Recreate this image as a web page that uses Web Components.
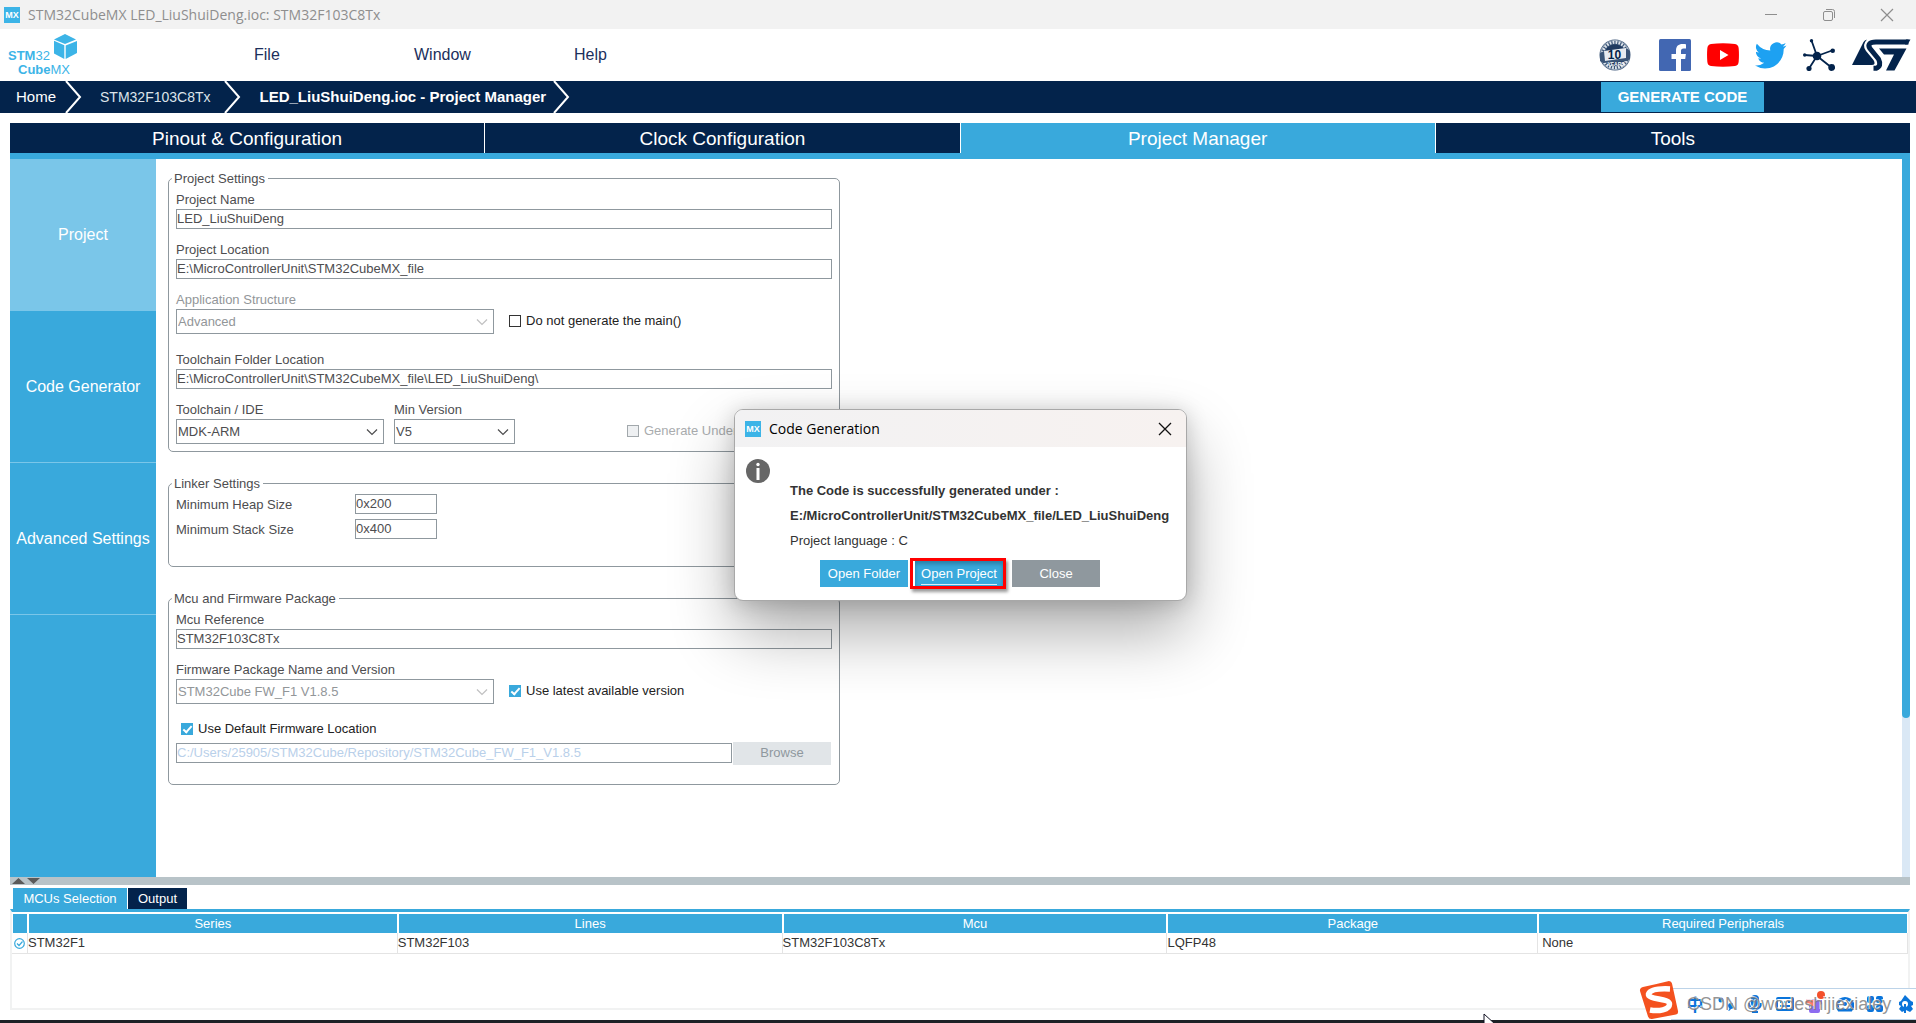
<!DOCTYPE html>
<html lang="en">
<head>
<meta charset="utf-8">
<title>STM32CubeMX</title>
<style>
html,body{margin:0;height:100%}
body{font:13px/20px "Liberation Sans",Arial,sans-serif;color:#4d4d4f;background:#fff;overflow:hidden;
--navy:#03234b;--blue:#39a9dc;--light:#7ac6e9;--line:#8f989e}
</style>
</head>
<body>
<cube-app></cube-app>
<script>
const BASE='<style>*,*::before,*::after{box-sizing:border-box}button,input,select{font:inherit;color:inherit;margin:0;border-radius:0}button{border:0;padding:0}svg{display:block;flex:none}a{color:inherit;text-decoration:none}</style>';
function define(name,html,init){
  const t=document.createElement('template');
  t.innerHTML=BASE+html;
  customElements.define(name,class extends HTMLElement{
    connectedCallback(){
      if(this.shadowRoot)return;
      const r=this.attachShadow({mode:'open'});
      r.append(t.content.cloneNode(true));
      if(init)init(this,r);
    }
  });
}

define('mx-icon',`<style>:host{display:block;flex:none}</style>
<svg width="16" height="16" viewBox="0 0 16 16"><rect width="16" height="16" fill="#3cb4e7"/><text x="8" y="11" text-anchor="middle" font-family="Liberation Sans,sans-serif" font-weight="bold" font-size="9" fill="#fff">MX</text></svg>`);

define('cube-titlebar',`<style>
:host{display:flex;align-items:center;height:29px;background:#f2f2f2;color:#8e8e8e;padding:0 22px 0 4px;font:14px/20px "Open Sans","Noto Sans",sans-serif}
span{margin-left:8px;flex:1}
.w{display:flex;gap:44px}
.w button{background:none;color:#8e8e8e}
</style>
<mx-icon></mx-icon><span><slot></slot></span>
<div class="w">
<button aria-label="Minimize"><svg width="14" height="14"><path d="M1 6.500h12" stroke="currentColor"/></svg></button>
<button aria-label="Restore"><svg width="14" height="14" fill="none" stroke="currentColor"><rect x="1.500" y="3.500" width="9" height="9" rx="1.500"/><path d="M4 1.500h6.500a2 2 0 0 1 2 2V10"/></svg></button>
<button aria-label="Close"><svg width="14" height="14"><path d="M1 1l12 12M13 1L1 13" stroke="currentColor" stroke-width="1.200"/></svg></button>
</div>`);

define('cube-header',`<style>
:host{display:flex;align-items:center;height:52px;padding:0 5px 0 8px;color:#1c2f5c;background:#fff}
nav{display:flex;flex:1;padding-left:174px;font-size:16px}
nav a{width:160px}
.i{display:flex;align-items:center;gap:16px}
.i a:first-child{margin-right:12px}
</style>
<svg width="72" height="44" viewBox="0 0 72 44" font-family="Liberation Sans,sans-serif" font-size="13" fill="#3cb4e7"><text x="0" y="27"><tspan font-weight="bold">STM</tspan>32</text><text x="10" y="41"><tspan font-weight="bold">Cube</tspan>MX</text>
<path d="M57 1L68 6.500 57 11 46 6.500z"/><path d="M46 7.800l10.300 4.500V26L46 20.500z"/><path d="M69 8l-11.300 4.500V26L69 20z"/></svg>
<nav><a href="#">File</a><a href="#">Window</a><a href="#">Help</a></nav>
<div class="i">
<a href="#" aria-label="10 years longevity commitment"><svg width="32" height="32" viewBox="0 0 32 32"><circle cx="16" cy="16" r="15.500" fill="#3b5577"/><circle cx="16" cy="16" r="12.700" fill="none" stroke="#dfe5ec" stroke-width="3" stroke-dasharray="1.800 1.200"/><circle cx="16" cy="16" r="14.700" fill="none" stroke="#c9d2dd" stroke-width=".7"/><circle cx="16" cy="16" r="10.500" fill="#1f3a60"/><path d="M1 14l4-2 22-3 4 3v8l-3 2-24 2-3-2z" fill="#3b5577"/><path d="M5 12l22-3v10L6 22z" fill="#e8ecf1"/><text x="15.500" y="19.500" text-anchor="middle" font-family="Liberation Sans,sans-serif" font-size="12" font-weight="bold" fill="#03234b">10</text><text x="17" y="26.500" text-anchor="middle" font-family="Liberation Sans,sans-serif" font-size="5" font-weight="bold" fill="#fff">YEARS</text></svg></a>
<a href="#" aria-label="Facebook"><svg width="32" height="32" viewBox="0 0 32 32"><rect width="32" height="32" rx="1.500" fill="#4267b2"/><path d="M22 32V20h4.200l.7-5H22v-3c0-1.500.6-2.400 2.600-2.400H27V5.200C26.500 5.100 25 5 23.400 5 19.600 5 17 7.200 17 11.400V15h-4.500v5H17v12z" fill="#fff"/></svg></a>
<a href="#" aria-label="YouTube"><svg width="32" height="32" viewBox="0 0 32 32"><path d="M4 5q12-1.400 24 0 3.500.5 3.700 4.500.5 6.500 0 13-.2 4-3.700 4.500-12 1.400-24 0-3.500-.5-3.700-4.500-.5-6.500 0-13Q.5 5.500 4 5z" fill="#f00"/><path d="M13 11l8.500 5L13 21z" fill="#fff"/></svg></a>
<a href="#" aria-label="Twitter"><svg width="32" height="32" viewBox="0 0 24 24"><path d="M23.600 4.900a9.700 9.700 0 0 1-2.800.8 4.900 4.900 0 0 0 2.200-2.700c-1 .6-2 1-3.100 1.200a4.900 4.900 0 0 0-8.400 4.500A13.900 13.900 0 0 1 1.400 3.500a4.900 4.900 0 0 0 1.500 6.600 4.900 4.900 0 0 1-2.200-.6c0 2.300 1.600 4.400 3.900 4.900a5 5 0 0 1-2.200.1 4.900 4.900 0 0 0 4.600 3.400A9.900 9.900 0 0 1 0 19.900a13.900 13.900 0 0 0 7.500 2.200c9.100 0 14.300-7.700 14-14.600a10 10 0 0 0 2.100-2.600z" fill="#1da1f2"/></svg></a>
<a href="#" aria-label="Community"><svg width="32" height="32" viewBox="0 0 32 32" fill="#03234b" stroke="#03234b" stroke-width="1.800"><path d="M14 17L8.500 1.500M14 17L1.500 16M14 17l15-5.500M14 17L6 29.500M14 17l14.500 11.500" /><g stroke="none"><circle cx="14" cy="17" r="4.300"/><circle cx="8.500" cy="1.700" r="1.700"/><circle cx="1.700" cy="16" r="1.700"/><circle cx="29.700" cy="11.700" r="2.300"/><circle cx="6" cy="29.500" r="2.600"/><circle cx="28.700" cy="28.500" r="3.400"/></g></svg></a>
<a href="#" aria-label="ST"><svg width="60" height="32" viewBox="0 0 60 32" fill="#03234b"><path d="M1 26L12.500 3Q13.500 1 16 .5Q10.500 6 15 12l7.500 9q3 5-2 5z"/><path d="M57.500 3H25Q15 3.500 19 9.500L27.500 20Q31 27 25 29.300H22.500" fill="none" stroke="#03234b" stroke-width="5"/><path d="M55 .5H59.500L56.600 5.500H54z"/><path d="M28 9.500H55.500L43.500 31.500H35L43 15.500H33z"/></svg></a>
</div>`);

define('cube-crumbs',`<style>
:host{display:flex;align-items:center;height:32px;background:var(--navy);color:#fff;font-size:15px}
a{padding:0 9px 0 16px}
a.d{padding:0 13px 0 18px;font-size:14px;color:#dde3ea}
b{padding:0 7px 0 19px;flex:none;font-size:15px}
button{margin-left:auto;margin-right:152px;width:163px;height:30px;background:var(--blue);font-size:15px;font-weight:bold;color:#fff}
</style>
<a href="#">Home</a><svg width="17" height="32" fill="none" stroke="#fff" stroke-width="2"><path d="M1 0l14 16L1 32"/></svg>
<a href="#" class="d">STM32F103C8Tx</a><svg width="17" height="32" fill="none" stroke="#fff" stroke-width="2"><path d="M1 0l14 16L1 32"/></svg>
<b>LED_LiuShuiDeng.ioc - Project Manager</b><svg width="17" height="32" fill="none" stroke="#fff" stroke-width="2"><path d="M1 0l14 16L1 32"/></svg>
<button>GENERATE CODE</button>`);

define('cube-tabs',`<style>
:host{display:grid;grid-template-columns:repeat(4,1fr);gap:1px;margin:10px 6px 0 10px;height:30px}
button{background:var(--navy);color:#fff;font-size:19px;line-height:32px;height:30px}
.on{background:var(--blue)}
</style>
<button>Pinout &amp; Configuration</button><button>Clock Configuration</button><button class="on">Project Manager</button><button>Tools</button>`);

define('cube-side',`<style>
:host{display:flex;flex-direction:column;width:146px;flex:none;background:var(--blue)}
button{height:152px;background:none;color:#fff;font-size:16px;border-bottom:1px solid var(--light);white-space:nowrap}
.on{background:var(--light)}
</style>
<button class="on">Project</button><button>Code Generator</button><button>Advanced Settings</button>`);

define('field-group',`<style>
:host{display:block;width:672px;max-width:100%}
fieldset{margin:0;min-width:0;border:1px solid var(--line);border-radius:5px;padding:1px 7px var(--pb,7px)}
legend{padding:0 3px 0 2px;margin-left:-4px;height:20px;line-height:22px}
.c{display:flex;flex-direction:column;gap:10px}
:host([tight]) .c{gap:5px}
</style><fieldset><legend></legend><div class="c"><slot></slot></div></fieldset>`,(e,r)=>{r.querySelector('legend').textContent=e.getAttribute('label')});

define('text-field',`<style>
:host{display:block}
div{display:flex;flex-direction:column}
label{height:20px;line-height:22px}
:host([row]) div{flex-direction:row}
:host([row]) label{width:179px}
:host([row]) input{width:82px}
input{height:20px;border:1px solid var(--line);padding:0;width:100%;background:#fff;outline:0}
:host([disabled]) input{color:#b9d0ea}
</style><div><label for="f"></label><input id="f" type="text"></div>`,(e,r)=>{
 const l=r.querySelector('label'),i=r.querySelector('input');
 if(e.hasAttribute('label'))l.textContent=e.getAttribute('label');else{l.remove();i.setAttribute('aria-label','Firmware location')}
 i.value=e.getAttribute('value');i.disabled=e.hasAttribute('disabled')});

define('select-field',`<style>
:host{display:block}
label{display:block;height:20px;line-height:22px}
.b{display:grid}
.b>*{grid-area:1/1}
select{appearance:none;width:100%;height:25px;border:1px solid var(--line);background:#fff;padding:0 1px;opacity:1;outline:0}
svg{justify-self:end;align-self:center;margin-right:6px;pointer-events:none}
:host([disabled]){color:#929699}
:host([disabled]) svg{opacity:.35}
:host([dark]) label{color:#4d4d4f}
</style><label for="f"></label><div class="b"><select id="f"><option></option></select><svg width="12" height="8" fill="none" stroke="#4d4d4f" stroke-width="1.200"><path d="M1 1.500l5 5 5-5"/></svg></div>`,(e,r)=>{
 r.querySelector('label').textContent=e.getAttribute('label');
 r.querySelector('option').textContent=e.getAttribute('value');
 r.querySelector('select').disabled=e.hasAttribute('disabled')});

define('check-field',`<style>
:host{display:flex;align-items:center;gap:5px;height:24px;color:#222;white-space:nowrap;margin-bottom:1px}
:host([low]){height:20px;padding-left:5px;margin:0}
input{appearance:none;width:12px;height:12px;border:1px solid #333;background:#fff;display:grid;place-items:center;flex:none}
input:checked{background:var(--blue);border-color:var(--blue)}
input:checked::after{content:"";width:5px;height:9px;margin-top:-2px;border:solid #fff;border-width:0 2px 2px 0;transform:rotate(42deg)}
input:disabled{background:#eef0f2;border-color:#a2a8ac}
:host([disabled]){color:#a9acae}
</style><input type="checkbox" id="f"><label for="f"></label>`,(e,r)=>{
 const i=r.querySelector('input');i.checked=e.hasAttribute('checked');i.disabled=e.hasAttribute('disabled');
 r.querySelector('label').textContent=e.getAttribute('label')});

define('project-form',`<style>
:host{display:flex;flex-direction:column;gap:21px;flex:1;min-width:0;padding:9px 12px 0}
.r{display:flex;align-items:flex-end;gap:15px;margin-bottom:5px}
.r.n{gap:10px;margin:0}
.w{width:318px}.m{width:208px}.s{width:121px}
.u{margin-left:102px}
.p{display:flex;align-items:center;gap:1px;margin-top:-8px;height:24px}
.p text-field{flex:1}
.p button{width:98px;height:23px;background:#e1e5e8;color:#8f989e;margin-right:1px}
</style>
<field-group label="Project Settings">
<text-field label="Project Name" value="LED_LiuShuiDeng"></text-field>
<text-field label="Project Location" value="E:\\MicroControllerUnit\\STM32CubeMX_file"></text-field>
<div class="r"><select-field class="w" disabled label="Application Structure" value="Advanced"></select-field><check-field label="Do not generate the main()"></check-field></div>
<text-field label="Toolchain Folder Location" value="E:\\MicroControllerUnit\\STM32CubeMX_file\\LED_LiuShuiDeng\\"></text-field>
<div class="r n"><select-field class="m" label="Toolchain / IDE" value="MDK-ARM"></select-field><select-field class="s" label="Min Version" value="V5"></select-field><check-field class="u" disabled label="Generate Under Root"></check-field></div>
</field-group>
<field-group label="Linker Settings" tight style="--pb:27px">
<text-field row label="Minimum Heap Size" value="0x200"></text-field>
<text-field row label="Minimum Stack Size" value="0x400"></text-field>
</field-group>
<field-group label="Mcu and Firmware Package" style="--pb:19px">
<text-field label="Mcu Reference" value="STM32F103C8Tx"></text-field>
<div class="r"><select-field class="w" dark disabled label="Firmware Package Name and Version" value="STM32Cube FW_F1 V1.8.5"></select-field><check-field checked label="Use latest available version"></check-field></div>
<check-field low checked label="Use Default Firmware Location"></check-field>
<div class="p"><text-field disabled value="C:/Users/25905/STM32Cube/Repository/STM32Cube_FW_F1_V1.8.5"></text-field><button disabled>Browse</button></div>
</field-group>`);

define('cube-work',`<style>
:host{display:flex;flex:1;min-height:0;margin:0 6px 0 10px}
main{display:flex;flex:1;min-width:0;border-top:6px solid var(--blue);overflow:hidden}
.s{width:8px;background:linear-gradient(var(--blue) 6px,#dae8f5 6px)}
.s div{height:78%;background:var(--blue);border-radius:4px}
</style><main><cube-side></cube-side><project-form></project-form></main><div class="s"><div></div></div>`);

define('mcu-panel',`<style>
:host{display:block;margin:0 6px 10px 10px}
.sp{height:8px;background:#b8c3c8;padding-left:2px}
.t{display:flex;gap:1px;padding:3px 0 0 3px}
.t button{height:21px;background:var(--navy);color:#fff;width:59px}
.t .on{background:var(--blue);width:114px}
.b{height:101px;border:2px solid #f1f2f2;border-top:3px solid var(--blue);padding:1px 0 0}
table{width:100%;border-collapse:separate;border-spacing:0;table-layout:fixed}
th{background:var(--blue);background-clip:padding-box;color:#fff;font-weight:normal;height:20px;padding:0;line-height:19px;border:solid #fff;border-width:1px 1px 0 1px}
td{height:21px;line-height:20px;padding:0;color:#333;border-right:1px solid #e4e4e4;border-bottom:1px solid #e4e4e4}
td:first-child{padding-left:2px}
td:last-child{padding-left:4px}
</style>
<div class="sp"><svg width="32" height="8" fill="#5a5a5a"><path d="M0 7L6.500 1 13 7zM15 1h13L21.500 7z"/></svg></div>
<div class="t"><button class="on">MCUs Selection</button><button>Output</button></div>
<div class="b"><table><colgroup><col><col><col><col><col><col></colgroup>
<thead><tr><th></th><th>Series</th><th>Lines</th><th>Mcu</th><th>Package</th><th>Required Peripherals</th></tr></thead>
<tbody><tr><td><svg width="11" height="11" fill="none" stroke="#39a9dc" stroke-width="1.200"><circle cx="5.500" cy="5.500" r="4.800"/><path d="M3 5.500l2 2 3.500-4"/></svg></td><td>STM32F1</td><td>STM32F103</td><td>STM32F103C8Tx</td><td>LQFP48</td><td>None</td></tr></tbody></table></div>`,(e,r)=>{
 ["16px","19.500%","20.300%","20.300%","19.550%",""].forEach((w,i)=>{if(w)r.querySelectorAll('col')[i].style.width=w})});

define('cube-dialog',`<style>
:host{display:block;position:absolute;left:734px;top:409px;width:453px;border:1px solid #a8a8a8;border-radius:9px;background:#fff;color:#333;overflow:hidden;box-shadow:0 32px 64px rgba(0,0,0,.32),0 2px 21px rgba(0,0,0,.18)}
header{display:flex;align-items:center;height:37px;padding:0 13px 0 10px;background:linear-gradient(90deg,#f2f2f3,#f7f2f0);color:#000;font:14px/20px "Open Sans","Noto Sans",sans-serif}
header span{flex:1;margin-left:8px}
header button{background:none;color:#111}
.b{display:flex;padding:12px 0 11px 11px;gap:20px}
.m{padding-top:19px;display:flex;flex-direction:column}
p,b{margin:0;line-height:25px;white-space:nowrap}
.a{display:flex;align-items:center;gap:2px;height:31px;margin:5px 0 0 30px}
.a button{width:88px;height:27px;background:var(--blue);color:#fff}
.a .g{background:#8f989e;margin-left:4px}
.f{border:3px solid #f00;width:96px;height:31px;background:#fff;box-shadow:2px 3px 3px rgba(0,0,0,.4);display:flex;justify-content:flex-end}
.a .f button{height:25px;box-shadow:inset 0 3px 4px rgba(0,0,0,.25)}
.f span{border-bottom:1px solid #d8eefa;padding-bottom:3px}
</style>
<header><mx-icon></mx-icon><span>Code Generation</span><button aria-label="Close dialog"><svg width="16" height="16"><path d="M2 2l12 12M14 2L2 14" stroke="currentColor" stroke-width="1.300"/></svg></button></header>
<div class="b"><svg width="24" height="24"><circle cx="12" cy="12" r="12" fill="#666"/><circle cx="12" cy="5.500" r="1.700" fill="#fff"/><path d="M12 9v12" stroke="#fff" stroke-width="3"/></svg>
<div class="m"><b>The Code is successfully generated under :</b><b>E:/MicroControllerUnit/STM32CubeMX_file/LED_LiuShuiDeng</b><p>Project language : C</p>
<div class="a"><button>Open Folder</button><div class="f"><button><span>Open Project</span></button></div><button class="g">Close</button></div></div></div>`);

define('ime-bar',`<style>
:host{display:flex;align-items:center;position:absolute;right:0;bottom:3px;height:40px;width:277px}
.bar{display:grid;grid-template-columns:repeat(8,30px);place-items:center;flex:1;height:32px;margin-left:-8px;align-self:flex-end;border:solid #bcd3e8;border-width:1px 0;background:#fff;padding-left:9px;color:#0a74da;overflow:hidden}
.z{font:bold 17px/20px "Noto Sans CJK SC",sans-serif}
.logo{position:relative;z-index:1}
p{position:absolute;left:48px;bottom:6px;margin:0;font-size:18px;line-height:20px;color:rgba(120,120,120,.8);text-shadow:-1px -1px 0 rgba(255,255,255,.8);white-space:nowrap}
</style>
<svg class="logo" width="40" height="40" viewBox="0 0 40 40"><path d="M4 7Q18 4 30 1q2.500 0 3 2.500L39 31q.5 3-2 3.500L13 39q-3 .3-4-2.500L1 11q-.5-3 3-4z" fill="#f4511e"/><path d="M31 9Q12 8 9.500 14c-1 6 21 4 21 10 0 6-11 7.500-19.500 6" fill="none" stroke="#fff" stroke-width="5.500"/></svg>
<div class="bar"><span class="z">中</span>
<svg width="16" height="16" fill="currentColor"><circle cx="4" cy="4" r="2.500"/><path d="M11 9a3 3 0 1 1 3 4q-1 2-3 2 2-2 1-3-1-1-1-3z"/></svg>
<svg width="16" height="18" fill="none" stroke="currentColor" stroke-width="2"><rect x="5" y="1" width="6" height="10" rx="3" fill="currentColor"/><path d="M2 8q0 6 6 6t6-6M5 17h6"/></svg>
<svg width="18" height="16" fill="none" stroke="currentColor" stroke-width="2"><rect x="1" y="2" width="16" height="12" rx="1"/><path d="M4 6h2M8 6h2M12 6h2M4 10h10"/></svg>
<svg width="20" height="28" viewBox="0 0 20 28"><path d="M1 9l5 1 4-1 3 1 4 0v4l-2 1v6q0 2-2 2H6q-2 0-2-2v-6L1 14z" fill="#8d6cf0"/><path d="M1 9l5 1 3 0v6H4v-1l-3-1z" fill="#ff7a6b"/><circle cx="16" cy="5" r="4" fill="#f4512c"/></svg>
<svg width="18" height="16" fill="none" stroke="currentColor" stroke-width="3"><path d="M3 14q-4-6 1-10 5-3 10 0 5 4 1 10z"/><circle cx="9" cy="8" r="2" fill="currentColor" stroke="none"/></svg>
<svg width="16" height="16" fill="currentColor"><rect width="7" height="7" rx="2"/><rect x="9" width="7" height="7" rx="2"/><rect y="9" width="7" height="7" rx="2"/><rect x="9" y="9" width="7" height="7" rx="2"/></svg>
<svg width="17" height="18" fill="currentColor"><path d="M8 0l6 6 2 1v3l-2 1 2 3-3 3-4-2-4 2-3-3 2-3-2-1V7l2-1z"/><circle cx="8" cy="9" r="3" fill="#fff"/><path d="M7 9h2v9H7z"/></svg>
</div><p>CSDN @wodeshijiexialey</p>`);

define('cube-app',`<style>
:host{display:flex;flex-direction:column;height:100vh;position:relative;overflow:hidden}
footer{height:3px;background:#1d2126;flex:none}
.cur{position:absolute;left:1483px;bottom:-9px}
</style>
<cube-titlebar>STM32CubeMX LED_LiuShuiDeng.ioc: STM32F103C8Tx</cube-titlebar>
<cube-header></cube-header><cube-crumbs></cube-crumbs><cube-tabs></cube-tabs>
<cube-work></cube-work><mcu-panel></mcu-panel><footer></footer>
<cube-dialog role="dialog" aria-label="Code Generation"></cube-dialog><ime-bar></ime-bar>
<svg class="cur" width="14" height="19"><path d="M1 1v15l4-4 3 6 2-1-3-6h5z" fill="#fff" stroke="#112" stroke-width="1"/></svg>`);
</script>
</body>
</html>
